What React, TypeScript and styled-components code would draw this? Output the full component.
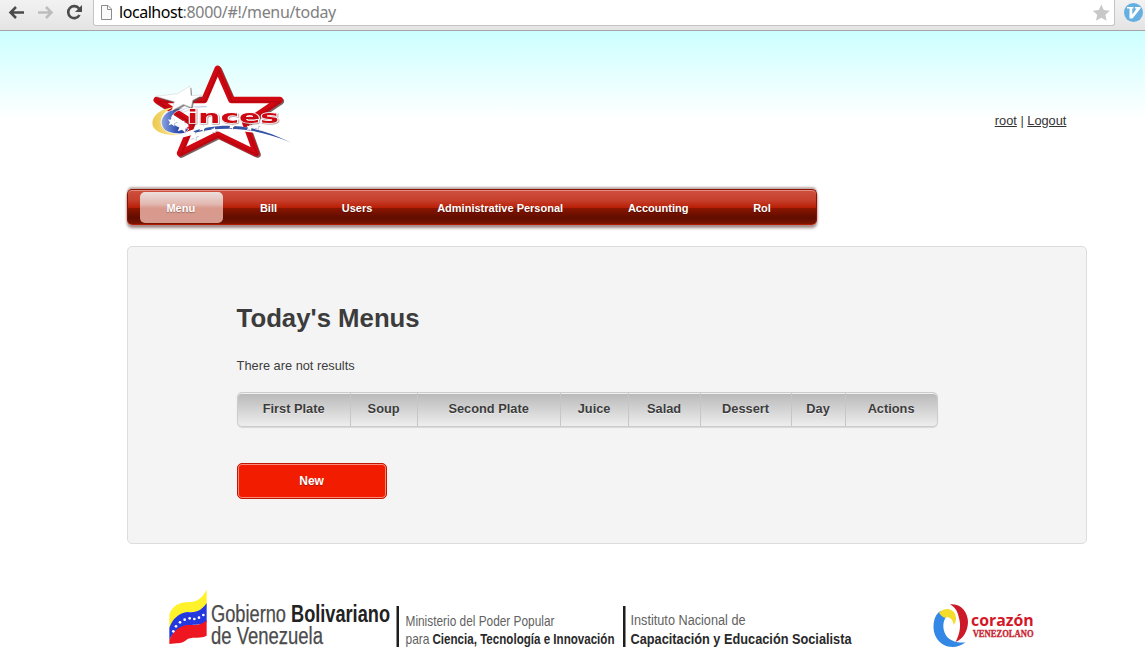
import React from "react";
import styled, { createGlobalStyle } from "styled-components";

const GlobalStyle = createGlobalStyle`
  * { box-sizing: border-box; }
  body {
    margin: 0;
    background: #fff;
    color: #3c3c3c;
    font-family: "Liberation Sans", Arial, sans-serif;
    font-size: 12.8px;
    overflow: hidden;
  }
`;

const Toolbar = styled.header`
  display: flex;
  height: 31px;
  background: linear-gradient(#f2f2f2, #e4e4e4);
  border-bottom: 1px solid #a9a5a6;
`;
const NavIcons = styled.svg`
  flex: none;
  width: 93px;
  height: 30px;
`;
const AddressBar = styled.div`
  display: flex;
  width: 1022px;
  height: 26px;
  background: #fff;
  border: 1px solid #c4c4c4;
  border-top: 0;
  border-radius: 0 0 3px 3px;
`;
const PageIcon = styled.svg`
  width: 25px;
  height: 25px;
`;
const Url = styled.div`
  flex: 1;
  font: 16px/24px "Noto Sans", "Open Sans", sans-serif;
  letter-spacing: -0.33px;
  color: #808080;
  white-space: nowrap;
`;
const Host = styled.span`
  color: #000;
  letter-spacing: -0.45px;
`;
const StarIcon = styled.svg`
  width: 24px;
  height: 25px;
`;
const Extension = styled.svg`
  width: 30px;
  height: 30px;
  flex: none;
`;

const Page = styled.div`
  height: 641px;
  padding: 24px 58px 0 127px;
  background: linear-gradient(#ccffff, #ffffff 88px);
`;
const Banner = styled.div`
  display: flex;
  justify-content: space-between;
  height: 134px;
  padding: 0 20.6px 0 13px;
`;
const Brand = styled.svg`
  width: 160px;
  height: 110px;
`;
const Account = styled.div`
  padding-top: 58px;
  line-height: 15px;
`;
const Link = styled.a`
  color: #333;
  text-decoration: underline;
`;

const Menu = styled.nav`
  display: flex;
  gap: 11px;
  width: 690px;
  height: 36px;
  padding: 2px 12px;
  border: 1px solid #8c1100;
  border-bottom-color: #b51c04;
  border-radius: 5px;
  background: linear-gradient(#d05040 0, #c6402c 30%, #b91e06 52%, #8c1500 53%, #5f0d00 82%, #7c1500 100%);
  box-shadow: inset 0 1px 0 #e08f83, 0 -2px 2px 0 rgba(70, 20, 15, 0.35), 0 3px 3px 0 rgba(70, 20, 15, 0.5);
`;
const MenuItem = styled.a<{ $active?: boolean }>`
  height: 31px;
  padding: 0 27.4px 0 26.4px;
  border-radius: 5px;
  background: ${(p) => (p.$active ? "linear-gradient(#ecdfdd, #e2b6ae 40%, #d9998d 52%, #d89b8f)" : "none")};
  color: #fff;
  font-size: 11px;
  font-weight: bold;
  line-height: 33px;
  text-shadow: 0 1px 1px rgba(0, 0, 0, 0.3);
  white-space: nowrap;
`;

const Panel = styled.main`
  width: 960px;
  height: 298px;
  margin-top: 21px;
  padding: 56px 109px 0 108.6px;
  border: 1px solid #ddd;
  border-radius: 5px;
  background: #f4f4f4;
`;
const Title = styled.h1`
  margin: 0;
  font-size: 25.75px;
  line-height: 30px;
`;
const Message = styled.p`
  margin: 25px 0 19px;
  line-height: 15px;
`;
const Table = styled.div`
  display: flex;
  width: 701px;
  height: 35px;
  border: 1px solid #ccc;
  border-radius: 5px;
  background: linear-gradient(#b8b8b8, #eeeeee);
  box-shadow: inset 0 1px 0 #f0f0f0, 0 1px 1px rgba(0, 0, 0, 0.12);
`;
const HeadCell = styled.div<{ $width: number }>`
  width: ${(p) => p.$width}px;
  border-right: 1px solid #c6c6c6;
  font-weight: bold;
  line-height: 31px;
  text-align: center;
  text-shadow: 0 1px 0 #eee;
  &:last-child { border-right: 0; }
`;
const NewButton = styled.button`
  display: block;
  width: 150px;
  height: 36px;
  margin-top: 36px;
  padding: 0;
  border: 1px solid #c01800;
  border-radius: 5px;
  background: #f21d00;
  box-shadow: inset 0 0 0 1px #f98a7a;
  color: #fff;
  font: bold 12px "Liberation Sans", Arial, sans-serif;
  text-shadow: 0 1px 1px rgba(0, 0, 0, 0.3);
`;

const Footer = styled.footer`
  display: flex;
  justify-content: space-between;
  padding: 36px 37px 0 33px;
`;
const Government = styled.svg`
  width: 710px;
  height: 75px;
`;
const Heart = styled.svg`
  width: 130px;
  height: 70px;
  margin-top: 10px;
`;

const menuItems = ["Menu", "Bill", "Users", "Administrative Personal", "Accounting", "Rol"];
const columns: [string, number][] = [
  ["First Plate", 113],
  ["Soup", 67],
  ["Second Plate", 143],
  ["Juice", 68],
  ["Salad", 72],
  ["Dessert", 91],
  ["Day", 54],
  ["Actions", 91],
];

const starPoints = (cx: number, cy: number, r: number, turn = 0, inner = 0.4) =>
  Array.from({ length: 10 }, (_, i) => {
    const a = ((i * 36 - 90 + turn) * Math.PI) / 180;
    const d = i % 2 ? r * inner : r;
    return `${(cx + d * Math.cos(a)).toFixed(1)},${(cy + d * Math.sin(a)).toFixed(1)}`;
  }).join(" ");

const smallStars: [number, number, number][] = [
  [97, 201, 15], [128, 215, 20], [162, 243, 14], [187, 219, 12],
  [222, 226, 10], [275, 214, 10], [329, 218, 11], [350, 213, 11],
];

function IncesLogo() {
  const outline = "M233 41 L274 135 L419 135 L316 204 L349 295 L233 239 L120 295 L158 204 L50 135 L193 135 Z";
  const bigStar = "150,93 153,122 187,120 158,136 153,157 130,148 95,167 103,140 47,124 113,116";
  return (
    <Brand viewBox="0 0 480 330">
      <defs>
        <linearGradient id="moonBlue" x1="0" x2="1">
          <stop offset="0" stopColor="#8ea6e4" />
          <stop offset="0.6" stopColor="#2c4cae" />
          <stop offset="1" stopColor="#203c9a" />
        </linearGradient>
        <linearGradient id="moonGold" x1="0" x2="1">
          <stop offset="0" stopColor="#ecc94c" />
          <stop offset="1" stopColor="#fff0ac" />
        </linearGradient>
      </defs>
      <path d={outline} transform="translate(4 4)" fill="none" stroke="#3e1c1c" strokeOpacity=".7" strokeWidth="19" strokeLinejoin="round" />
      <path d={outline} fill="#fff" stroke="#d00812" strokeWidth="19" strokeLinejoin="round" />
      <path d={outline} transform="translate(3 5)" fill="none" stroke="#7d0610" strokeOpacity=".35" strokeWidth="4" strokeLinejoin="round" />
      <path d="M100 157 C66 160 37 180 37 205 C38 234 84 246 125 238 C82 235 62 222 62 200 C64 178 80 166 100 157Z" fill="url(#moonGold)" />
      <path d="M132 160 C92 157 62 180 64 205 C67 229 92 239 132 236 L147 222 C118 220 96 209 94 194 C94 177 110 166 132 160Z" fill="url(#moonBlue)" stroke="#fff" strokeWidth="2" />
      <path d="M122 167 Q155 150 200 155 Q160 156 130 172Z" fill="#fff" stroke="#8190bd" strokeWidth="1" />
      <path d="M122 240 C188 207 314 196 449 261 C315 207 206 221 130 244Z" fill="#fff" stroke="#fff" strokeWidth="5" />
      <path d="M160 229 C230 205 330 200 454 263 C332 212 242 215 165 233Z" fill="#3554a7" />
      <polygon points={bigStar} fill="#555" opacity=".7" transform="translate(4 5)" />
      <polygon points={bigStar} fill="#fff" stroke="#ccc" strokeWidth="1.5" />
      {smallStars.map(([x, y, r]) => (
        <g key={x}>
          <polygon points={starPoints(x + 1.5, y + 2, r, 12, 0.48)} fill="#5c6482" opacity=".5" />
          <polygon points={starPoints(x, y, r, 12, 0.48)} fill="#fff" />
        </g>
      ))}
      <g fontFamily="DejaVu Sans, sans-serif" fontWeight="bold" fontSize="55">
        <text x="142" y="203" textLength="275" lengthAdjust="spacingAndGlyphs" fill="#cc0812" stroke="#fff" strokeWidth="4" paintOrder="stroke" style={{ filter: "drop-shadow(2px 2px 0 #5b222288)" }}>inces</text>
      </g>
    </Brand>
  );
}

function GovernmentLogo() {
  const flagStars: [number, number][] = [[40, 154], [48, 139], [60, 127], [74, 119], [89, 115], [103, 117], [117, 113], [130, 105]];
  return (
    <Government viewBox="0 0 710 75">
      <g transform="scale(.33333)">
        <path d="M28 105 C35 75 63 64 94 66 C118 63 130 47 140 29 L140 82 C121 104 103 94 79 97 C53 105 38 121 28 146Z" fill="#fff22b" />
        <path d="M28 144 C37 116 57 99 83 96 C111 100 127 88 140 69 L140 127 C119 139 99 132 79 137 C53 144 40 157 28 180Z" fill="#2339df" />
        <path d="M28 180 C41 153 56 139 80 135 C105 135 125 137 140 120 L140 167 C122 176 103 170 84 176 C73 185 62 191 49 190 L28 192Z" fill="#ee1721" />
        {flagStars.map(([x, y]) => <circle key={x} cx={x} cy={y} r="4" fill="#fff" />)}
      </g>
      <g fontFamily="Liberation Sans, Arial, sans-serif">
        <text x="51" y="41.5" fontSize="23" fill="#4b4b4b" stroke="#4b4b4b" strokeWidth=".25" textLength="75" lengthAdjust="spacingAndGlyphs">Gobierno</text>
        <text x="131" y="41.5" fontSize="23" fontWeight="bold" fill="#222" textLength="99" lengthAdjust="spacingAndGlyphs">Bolivariano</text>
        <text x="51" y="63.5" fontSize="23" fill="#4b4b4b" stroke="#4b4b4b" strokeWidth=".25" textLength="112" lengthAdjust="spacingAndGlyphs">de Venezuela</text>
        <rect x="236.5" y="26" width="2.5" height="41" fill="#1d1d1d" />
        <text x="245.5" y="46" fontSize="15" fill="#626262" textLength="149" lengthAdjust="spacingAndGlyphs">Ministerio del Poder Popular</text>
        <text x="245.5" y="64" fontSize="15" fill="#626262" textLength="24" lengthAdjust="spacingAndGlyphs">para</text>
        <text x="272.5" y="64" fontSize="15" fontWeight="bold" fill="#292929" textLength="182" lengthAdjust="spacingAndGlyphs">Ciencia, Tecnología e Innovación</text>
        <rect x="463" y="26" width="2.5" height="41" fill="#1d1d1d" />
        <text x="470.5" y="45" fontSize="15.5" fill="#626262" textLength="115" lengthAdjust="spacingAndGlyphs">Instituto Nacional de</text>
        <text x="470.5" y="63.5" fontSize="15.5" fontWeight="bold" fill="#292929" textLength="221" lengthAdjust="spacingAndGlyphs">Capacitación y Educación Socialista</text>
      </g>
    </Government>
  );
}

function HeartLogo() {
  return (
    <Heart viewBox="0 0 390 210">
      <path d="M90 43 C122 38 144 66 144 96 C143 124 130 146 107 156 C119 132 124 108 117 84 C113 65 106 52 90 43Z" fill="#cc1a28" />
      <path d="M62 62 C38 76 34 120 50 145 C68 174 108 180 137 157 C108 160 82 150 74 128 C67 108 70 94 78 80Z" fill="#3488e5" />
      <path d="M57 68 C72 52 98 54 106 74 C110 86 108 96 101 104 C98 88 90 79 74 83 C68 80 62 76 57 68Z" fill="#f3dc2c" />
      <text x="153" y="109" fontFamily="Open Sans, sans-serif" fontWeight="bold" fontSize="50" fill="#d21828" textLength="188" lengthAdjust="spacingAndGlyphs">corazón</text>
      <text x="158" y="142" fontFamily="Liberation Serif, serif" fontWeight="bold" fontSize="29" fill="#c92531" stroke="#c92531" strokeWidth="1" textLength="183" lengthAdjust="spacingAndGlyphs">VENEZOLANO</text>
    </Heart>
  );
}

export default function App() {
  return (
    <>
      <GlobalStyle />
      <Toolbar>
        <NavIcons viewBox="0 0 93 30" fill="none">
          <path d="M24 12.5H11 M16 7L10.5 12.5L16 18" stroke="#4b4b4b" strokeWidth="2.5" />
          <path d="M38 12.5H51 M46 7L51.5 12.5L46 18" stroke="#bdbdbd" strokeWidth="2.5" />
          <path d="M79 8.5A6 6 0 1 0 79.5 15" stroke="#4b4b4b" strokeWidth="2.6" />
          <path d="M82 5V12H75Z" fill="#4b4b4b" />
        </NavIcons>
        <AddressBar>
          <PageIcon viewBox="0 0 25 25" fill="#fafafa" stroke="#8c8c8c">
            <path d="M7.5 5.5H14L17.5 9V19.5H7.5Z M13.5 5.5V9.5H17.5" />
          </PageIcon>
          <Url><Host>localhost</Host>:8000/#!/menu/today</Url>
          <StarIcon viewBox="0 0 24 25">
            <polygon points={starPoints(11.3, 13.5, 9, 0, 0.48)} fill="#c8c8c8" />
          </StarIcon>
        </AddressBar>
        <Extension viewBox="0 0 30 30">
          <circle cx="18.5" cy="12.5" r="9.5" fill="#65afe1" />
          <path d="M12 7H18.5V8.5H17.3V14.5L21.5 8.5H20V7H25.5V8.5L17.5 18.5H14.5V8.5H12Z" fill="#fff" />
        </Extension>
      </Toolbar>
      <Page>
        <Banner>
          <IncesLogo />
          <Account><Link>root</Link> | <Link>Logout</Link></Account>
        </Banner>
        <Menu>
          {menuItems.map((item, i) => <MenuItem key={item} $active={i === 0}>{item}</MenuItem>)}
        </Menu>
        <Panel>
          <Title>Today's Menus</Title>
          <Message>There are not results</Message>
          <Table>
            {columns.map(([name, width]) => <HeadCell key={name} $width={width}>{name}</HeadCell>)}
          </Table>
          <NewButton>New</NewButton>
        </Panel>
        <Footer>
          <GovernmentLogo />
          <HeartLogo />
        </Footer>
      </Page>
    </>
  );
}
